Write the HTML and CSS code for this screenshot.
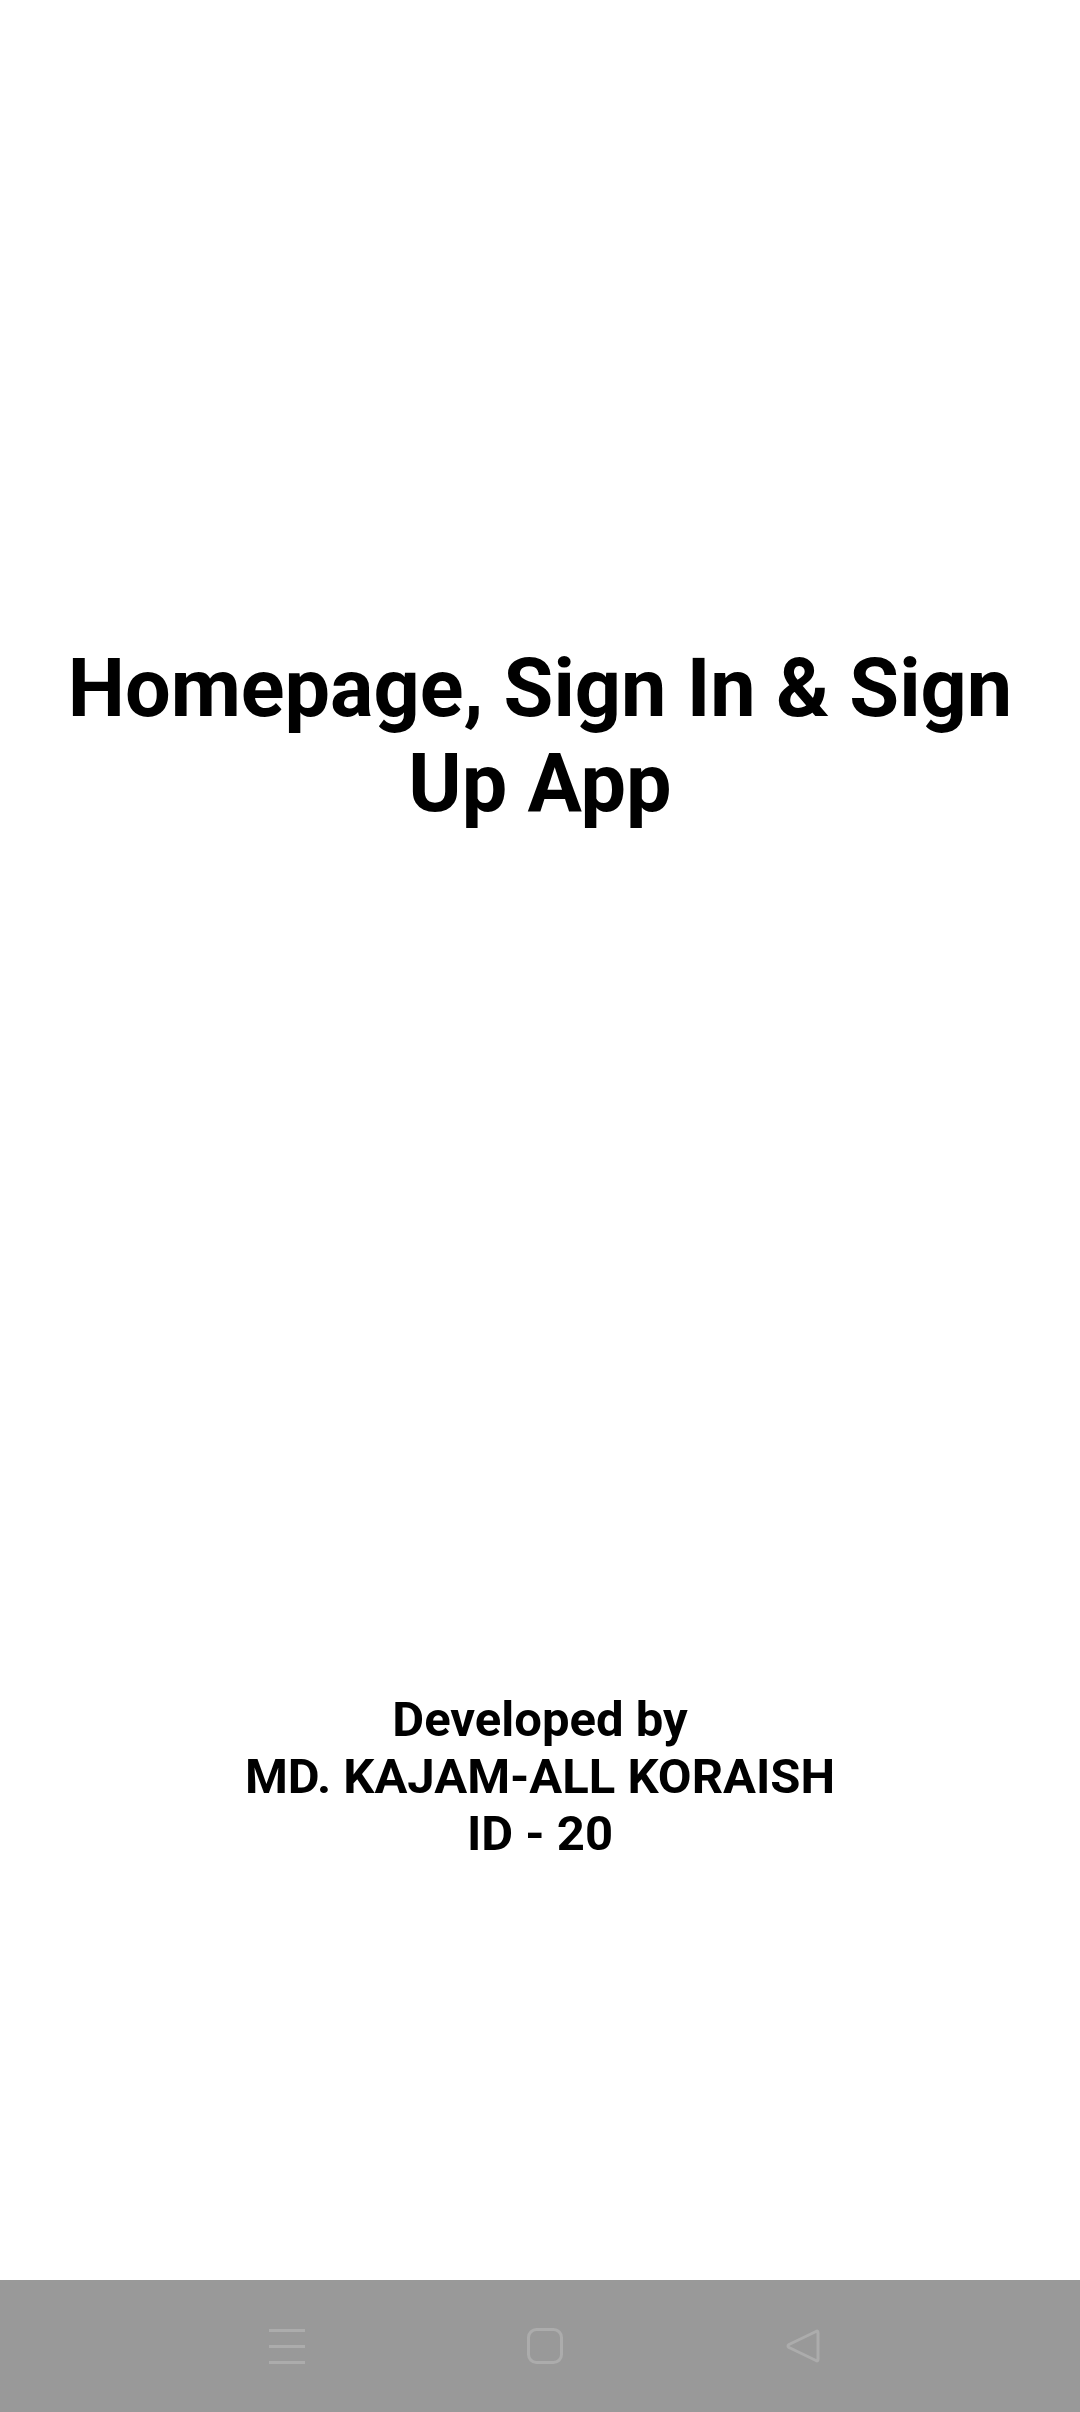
FILE: index.html
```html
<!DOCTYPE html>
<html lang="en">
<head>
<meta charset="utf-8">
<title>Homepage, Sign In &amp; Sign Up App</title>
<link rel="stylesheet" href="styles.css">
</head>
<body>
<div class="screen">
  <main class="content">
    <h1 class="title">Homepage, Sign In &amp; Sign<br>Up App</h1>
    <p class="dev">Developed by<br>MD. KAJAM-ALL KORAISH<br>ID - 20</p>
  </main>
  <nav class="navbar">
    <svg class="nav-icon" width="36" height="36" viewBox="0 0 36 36" aria-hidden="true">
      <rect x="0" y="1" width="36" height="3" fill="#acacac"/>
      <rect x="0" y="17" width="36" height="3" fill="#acacac"/>
      <rect x="0" y="33" width="36" height="3" fill="#acacac"/>
    </svg>
    <svg class="nav-icon" width="36" height="36" viewBox="0 0 36 36" aria-hidden="true">
      <rect x="1.5" y="1.5" width="33" height="33" rx="8" fill="none" stroke="#acacac" stroke-width="3"/>
    </svg>
    <svg class="nav-icon" width="36" height="36" viewBox="0 0 36 36" aria-hidden="true">
      <path d="M31 3.5 Q33 2 33 5 L33 31 Q33 34 31 32.5 L4 19.5 Q2 18 4 16.5 Z" fill="none" stroke="#acacac" stroke-width="3" stroke-linejoin="round"/>
    </svg>
  </nav>
</div>
</body>
</html>
```
FILE: styles.css
```css
html, body {
  margin: 0;
  padding: 0;
  background: #ffffff;
}
.screen {
  width: 1080px;
  height: 2412px;
  display: flex;
  flex-direction: column;
  font-family: Roboto, "Liberation Sans", sans-serif;
  color: #000000;
}
.content {
  flex: 1;
  display: flex;
  flex-direction: column;
  align-items: center;
  padding-top: 641px;
}
.title {
  margin: 0;
  font-size: 81px;
  font-weight: 700;
  line-height: normal;
  text-align: center;
}
.dev {
  margin: 860px 0 0;
  font-size: 49px;
  font-weight: 700;
  line-height: normal;
  text-align: center;
}
.navbar {
  height: 132px;
  background: #999999;
  display: flex;
  align-items: center;
  justify-content: center;
  gap: 222px;
  padding-left: 10px;
}
.nav-icon {
  display: block;
}
```
